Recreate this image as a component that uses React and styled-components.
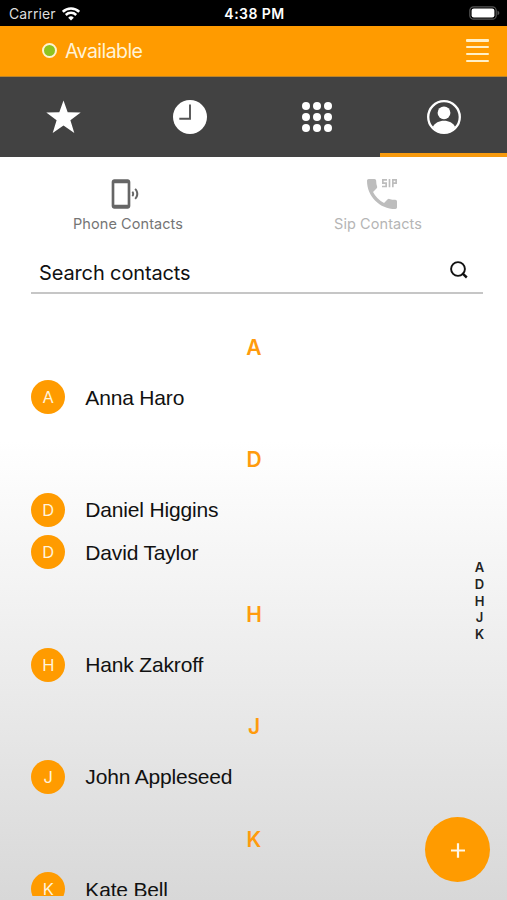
import React, { useState } from 'react';
import styled, { createGlobalStyle } from 'styled-components';
import { MdDialerSip, MdPhonelinkRing } from 'react-icons/md';

const GlobalStyle = createGlobalStyle`
  * {
    box-sizing: border-box;
  }

  body {
    margin: 0;
    font-family: Inter, 'Liberation Sans', sans-serif;
  }

  button {
    border: 0;
    padding: 0;
    background: none;
    font: inherit;
    color: inherit;
    cursor: pointer;
  }
`;

const Screen = styled.div`
  position: relative;
  display: flex;
  flex-direction: column;
  height: 100vh;
  overflow: hidden;
  background: linear-gradient(#fff 0, #fff 49%, #f1f1f1 68%, #d8d8d8 100%);
`;

const StatusBar = styled.div`
  display: grid;
  grid-template-columns: 1fr auto 1fr;
  align-items: center;
  flex: none;
  height: 25.5px;
  padding: 2px 7px 0 9px;
  background: #000;
  color: #fff;
`;

const Carrier = styled.div`
  display: flex;
  align-items: center;
  gap: 6px;
  font-size: 14px;
  letter-spacing: 0.1px;
  color: #ddd;
`;

const Clock = styled.div`
  font-size: 14px;
  font-weight: 600;
  letter-spacing: 0.45px;
`;

const BatteryIcon = styled.svg`
  justify-self: end;
  margin-top: -2px;
`;

const Header = styled.header`
  display: flex;
  align-items: center;
  flex: none;
  height: 51.5px;
  padding: 0 18px 0 42px;
  background: #ff9b00;
  border-bottom: 1px solid #b9842c;
  color: #fff3d6;
`;

const StatusDot = styled.span`
  width: 15px;
  height: 15px;
  margin-right: 8px;
  border: 2.5px solid #fff3cf;
  border-radius: 50%;
  background: #8fc31f;
`;

const StatusText = styled.span`
  flex: 1;
  font-size: 19.5px;
  letter-spacing: -0.55px;
`;

const MenuButton = styled.button`
  display: flex;
  flex-direction: column;
  gap: 4.6px;
  width: 23px;
`;

const MenuLine = styled.span`
  height: 2.2px;
  border-radius: 1px;
  background: #fff0c8;
`;

const Tabs = styled.nav`
  display: grid;
  grid-template-columns: repeat(4, 1fr);
  flex: none;
  height: 80px;
  background: #424242;
`;

const Tab = styled.button`
  display: flex;
  align-items: center;
  justify-content: center;
  border-top: 4px solid transparent;
  border-bottom: 4px solid ${(props) => (props.$active ? '#f79a0e' : 'transparent')};
`;

const Sources = styled.div`
  display: grid;
  grid-template-columns: 250px 250px;
  flex: none;
  height: 96px;
  padding: 17px 0 0 3px;
`;

const Source = styled.button`
  display: flex;
  flex-direction: column;
  align-items: center;
  align-self: start;
  font-size: 14.5px;
  letter-spacing: 0.07px;
  color: ${(props) => (props.$active ? '#757575' : '#b5b5b5')};
`;

const SourceIcon = styled.span`
  display: flex;
  align-items: center;
  height: 40px;
  margin: 0 ${(props) => (props.$shift > 0 ? 0 : -props.$shift)}px 1px ${(props) => Math.max(props.$shift, 0)}px;
  color: ${(props) => (props.$active ? '#666' : '#bdbdbd')};
`;

const SearchBar = styled.label`
  display: flex;
  align-items: center;
  justify-content: space-between;
  flex: none;
  height: 41px;
  margin: 0 24px 0 31px;
  padding: 0 15px 0 8px;
  border-bottom: 2px solid #c6c6c6;
`;

const SearchInput = styled.input`
  flex: 1;
  min-width: 0;
  padding: 0;
  border: 0;
  outline: 0;
  background: none;
  font: 20px Inter, 'Liberation Sans', sans-serif;
  letter-spacing: -0.13px;
  color: #111;

  &::placeholder {
    color: #111;
    opacity: 1;
  }
`;

const SearchIcon = styled.svg`
  margin-bottom: 6px;
`;

const ContactList = styled.main`
  flex: 1;
  min-height: 0;
  margin-bottom: 4.5px;
  padding-top: 12.5px;
  overflow: hidden;
`;

const Letter = styled.h2`
  height: 69.6px;
  margin: 0;
  padding: 28.4px 0 0 1px;
  font-size: 21px;
  font-weight: 600;
  line-height: 26px;
  text-align: center;
  color: #ff9b0d;
`;

const Contact = styled.div`
  display: flex;
  align-items: center;
  height: 42.7px;
  padding-left: 31.3px;
`;

const Avatar = styled.span`
  display: flex;
  align-items: center;
  justify-content: center;
  width: 34px;
  height: 34px;
  margin-right: 20px;
  border-radius: 50%;
  background: #ff9b00;
  font-size: 16.5px;
  color: #fff3dc;
`;

const Name = styled.span`
  padding-top: 1px;
  font-family: 'Liberation Sans', sans-serif;
  font-size: 21px;
  letter-spacing: -0.17px;
  color: #111;
`;

const AlphabetIndex = styled.div`
  position: absolute;
  top: 559px;
  right: 18px;
  display: flex;
  flex-direction: column;
  width: 19px;
  font-size: 13px;
  font-weight: 600;
  line-height: 16.8px;
  text-align: center;
  color: #222;
`;

const AddButton = styled.button`
  position: absolute;
  right: 17px;
  bottom: 18px;
  display: flex;
  align-items: center;
  justify-content: center;
  width: 65px;
  height: 65px;
  padding-top: 2px;
  border-radius: 50%;
  background: #ff9b00;
`;

const groups = [
  { letter: 'A', names: ['Anna Haro'] },
  { letter: 'D', names: ['Daniel Higgins', 'David Taylor'] },
  { letter: 'H', names: ['Hank Zakroff'] },
  { letter: 'J', names: ['John Appleseed'] },
  { letter: 'K', names: ['Kate Bell'] },
];

const WifiIcon = () => (
  <svg width="18" height="14" viewBox="0 0 18 14" fill="none" stroke="#fff" strokeWidth="2.5">
    <path d="M0.8 4.8a11.6 11.6 0 0 1 16.4 0" />
    <path d="M3.8 8a7.4 7.4 0 0 1 10.4 0" />
    <path d="M9 13.4 6.2 10.7a4 4 0 0 1 5.6 0z" fill="#fff" stroke="none" />
  </svg>
);

const StarIcon = () => (
  <svg width="36" height="36" viewBox="-0.5 0 36 36" fill="#fff">
    <path d="M18 1.5l4.2 11.8 13 .3-10.300 7.700 3.900 12.700L18 26.500 7.200 34l3.900-12.700L.800 13.600l13-.3z" />
  </svg>
);

const ClockIcon = () => (
  <svg width="34" height="34" viewBox="0 0 34 34">
    <circle cx="17" cy="17" r="17" fill="#fff" />
    <path d="M17 4.5v14.3H6.3" fill="none" stroke="#555" strokeWidth="1.9" />
  </svg>
);

const KeypadIcon = () => (
  <svg width="30" height="30" viewBox="0 0 30 30" fill="#fff">
    {[4, 15, 26].map((y) => [4, 15, 26].map((x) => <circle key={`${x}-${y}`} cx={x} cy={y} r="4" />))}
  </svg>
);

const PersonIcon = () => (
  <svg width="34" height="34" viewBox="0 0 34 34">
    <circle cx="17" cy="17" r="15.8" fill="none" stroke="#fff" strokeWidth="2.3" />
    <circle cx="17" cy="12.8" r="6.4" fill="#fff" />
    <path d="M5.8 27C8 23 12 20.8 17 20.8S26 23 28.2 27C25.5 30.5 21.5 32.6 17 32.6S8.5 30.5 5.8 27z" fill="#fff" />
  </svg>
);

const tabs = [
  { id: 'favorites', icon: <StarIcon /> },
  { id: 'recents', icon: <ClockIcon /> },
  { id: 'keypad', icon: <KeypadIcon /> },
  { id: 'contacts', icon: <PersonIcon /> },
];

const App = () => {
  const [tab, setTab] = useState('contacts');
  const [source, setSource] = useState('phone');

  return (
    <Screen>
      <GlobalStyle />

      <StatusBar>
        <Carrier>
          Carrier
          <WifiIcon />
        </Carrier>
        <Clock>4:38 PM</Clock>
        <BatteryIcon width="31" height="14" viewBox="0 0 31 14">
          <rect x="0.8" y="0.8" width="26.4" height="12.4" rx="3.8" fill="none" stroke="#555" strokeWidth="1.2" />
          <rect x="2.6" y="2.5" width="22.8" height="9" rx="2.2" fill="#fff" />
          <path d="M28.5 4.8c2.4.7 2.4 3.7 0 4.4z" fill="#555" />
        </BatteryIcon>
      </StatusBar>

      <Header>
        <StatusDot />
        <StatusText>Available</StatusText>
        <MenuButton aria-label="Menu">
          <MenuLine />
          <MenuLine />
          <MenuLine />
          <MenuLine />
        </MenuButton>
      </Header>

      <Tabs>
        {tabs.map(({ id, icon }) => (
          <Tab key={id} aria-label={id} $active={tab === id} onClick={() => setTab(id)}>
            {icon}
          </Tab>
        ))}
      </Tabs>

      <Sources>
        <Source $active={source === 'phone'} onClick={() => setSource('phone')}>
          <SourceIcon $active={source === 'phone'} $shift={-6}>
            <MdPhonelinkRing size={32} />
          </SourceIcon>
          Phone Contacts
        </Source>
        <Source $active={source === 'sip'} onClick={() => setSource('sip')}>
          <SourceIcon $active={source === 'sip'} $shift={8}>
            <MdDialerSip size={40} />
          </SourceIcon>
          Sip Contacts
        </Source>
      </Sources>

      <SearchBar>
        <SearchInput placeholder="Search contacts" />
        <SearchIcon width="18" height="18" viewBox="0 0 18 18" fill="none" stroke="#111" strokeWidth="1.9">
          <circle cx="8" cy="8" r="6.9" />
          <path d="M12.2 12.2l4.600 4.300" strokeWidth="2.4" />
        </SearchIcon>
      </SearchBar>

      <ContactList>
        {groups.map(({ letter, names }) => (
          <section key={letter}>
            <Letter>{letter}</Letter>
            {names.map((name) => (
              <Contact key={name}>
                <Avatar>{letter}</Avatar>
                <Name>{name}</Name>
              </Contact>
            ))}
          </section>
        ))}
      </ContactList>

      {/* Quick jump letters, floating over the list */}
      <AlphabetIndex>
        {groups.map(({ letter }) => (
          <span key={letter}>{letter}</span>
        ))}
      </AlphabetIndex>

      <AddButton aria-label="Add contact">
        <svg width="14" height="15" viewBox="0 0 14 15" stroke="#fff8e8" strokeWidth="2.2">
          <path d="M7 0.3v14.4M0 7.5h14" />
        </svg>
      </AddButton>
    </Screen>
  );
};

export default App;
